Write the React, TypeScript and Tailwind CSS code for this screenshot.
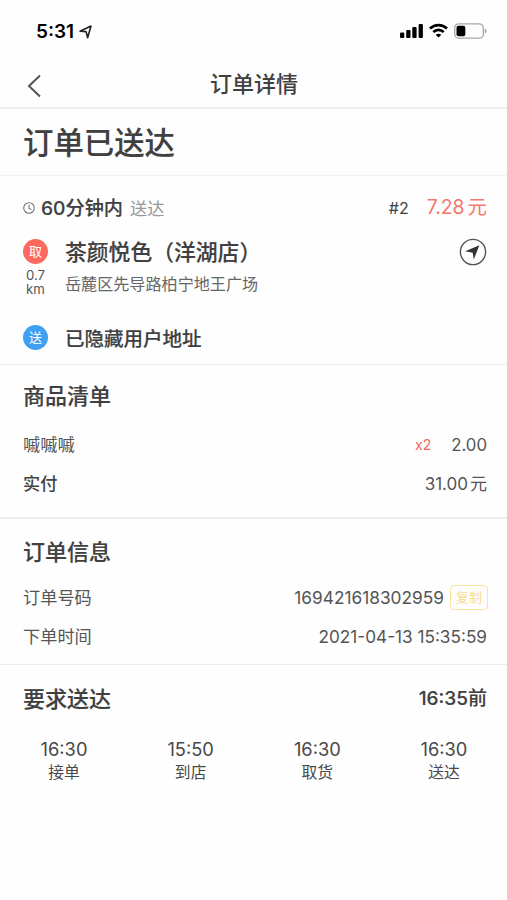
import React from "react";

const medium = "font-medium [-webkit-text-stroke:0.15px_currentColor]";

function InfoRow({ label, strong, children }: { label: string; strong?: boolean; children: React.ReactNode }) {
  return (
    <div className="flex h-[39px] items-center justify-between pt-px text-[17.2px] text-[#555]">
      <span className={strong ? "font-medium text-[#444]" : ""}>{label}</span>
      <div className="flex items-center">{children}</div>
    </div>
  );
}

function Step({ time, label }: { time: string; label: string }) {
  return (
    <div className="flex w-20 flex-col items-center text-[#484848]">
      <span className="h-[23px] text-[18.3px] leading-[24px]">{time}</span>
      <span className="h-[23px] text-[15.8px] leading-[26px]">{label}</span>
    </div>
  );
}

function StatusBar() {
  return (
    <header className="flex h-[60px] items-center justify-between pl-[36px] pr-[20px] pt-[2px] text-black">
      <div className="flex items-center gap-[5px]">
        <span className="w-[38px] pt-px text-[19px] font-semibold leading-none">5:31</span>
        <svg className="mt-px" width="13" height="14" viewBox="0 0 13 14" fill="none" stroke="#222" strokeWidth="1.6" strokeLinejoin="round">
          <path d="M1 6.2 12 1 8.6 12.8 7.1 6.6Z" />
        </svg>
      </div>
      <div className="flex items-center">
        <svg width="24" height="16" viewBox="0 0 24 16">
          <rect x="0" y="9.5" width="4.3" height="5.5" rx="1" />
          <rect x="6.2" y="7" width="4.3" height="8" rx="1" />
          <rect x="12.3" y="4" width="4.3" height="11" rx="1" />
          <rect x="18.6" y="1" width="4.3" height="14" rx="1" />
        </svg>
        <svg className="ml-[5px]" width="19" height="16" viewBox="0 0 19 16" fill="none" stroke="#000">
          <path d="M1 5.5C5.7.9 13.3.9 18 5.5" strokeWidth="2.7" />
          <path d="M4.3 9C7.3 6.1 11.7 6.1 14.7 9" strokeWidth="2.6" />
          <path d="m6.7 11.7 2.8 2.9 2.8-2.9c-1.6-1.4-4-1.4-5.6 0Z" fill="#000" stroke="none" />
        </svg>
        <svg className="ml-[6px]" width="33" height="16" viewBox="0 0 33 16">
          <rect x="0.7" y="0.8" width="28.6" height="14.4" rx="4" fill="none" stroke="#a6a6a6" strokeWidth="1.3" />
          <rect x="2.5" y="2.8" width="8.8" height="10.4" rx="2" />
          <path d="M30.8 5.5c2.3.8 2.3 4.2 0 5Z" fill="#a6a6a6" />
        </svg>
      </div>
    </header>
  );
}

export default function App() {
  return (
    <div lang="zh-CN" className="h-[900px] w-full overflow-hidden bg-[#fefefe] font-['Inter','Noto_Sans_CJK_SC',sans-serif] leading-none text-[#404040]">
      <StatusBar />
      <nav className="grid h-[47px] grid-cols-[60px_1fr_60px] items-center">
        <svg className="ml-[27px] mt-[5px]" width="14" height="24" viewBox="0 0 14 24" fill="none" stroke="#555" strokeWidth="2">
          <path d="M13 1.5 2 12 13 22.5" />
        </svg>
        <h1 className="pl-px text-center text-[22px] font-medium">订单详情</h1>
      </nav>

      <section className="flex h-[69px] items-center border-b border-t-2 border-b-[#f1f1f1] border-t-[#f0f0f0] pl-[23px] pt-[2px]">
        <h2 className={`text-[30.4px] ${medium}`}>订单已送达</h2>
      </section>

      <section className="h-[189px] border-b border-[#ededed] pl-[23px] pr-[20px] pt-[12px]">
        <div className="flex h-[40px] items-center">
          <svg width="12" height="12" viewBox="0 0 12 12" fill="none" stroke="#777" strokeWidth="1.1">
            <circle cx="6" cy="6" r="5.3" />
            <path d="M6 2.8V6.4L8.3 7.5" />
          </svg>
          <span className={`ml-[6px] pt-[2px] text-[19.2px] ${medium}`}>60分钟内</span>
          <span className="ml-[7px] pt-[2px] text-[17.2px] text-[#999]">送达</span>
          <span className="ml-auto text-[16px]">#2</span>
          <span className="ml-[18px] pb-px text-[19.4px] text-[#f4766c]">7.28<span className="ml-[3px]">元</span></span>
        </div>
        <div className="flex h-[86px] pt-[4px]">
          <div className="flex w-[42px] flex-col">
            <div className="mt-[7px] flex size-[25px] items-center justify-center rounded-full bg-[#fb695f] text-[13px] text-white">取</div>
            <div className="mt-[4px] flex w-[25px] flex-col items-center text-[13.2px] leading-[14px] text-[#555]">
              <span>0.7</span>
              <span>km</span>
            </div>
          </div>
          <div className="flex-1">
            <h3 className={`h-[39px] font-['Noto_Sans_CJK_SC',sans-serif] text-[21.8px] leading-[38px] ${medium}`}>茶颜悦色（洋湖店）</h3>
            <p className="text-[16.1px] leading-[26px] text-[#666]">岳麓区先导路柏宁地王广场</p>
          </div>
          <svg className="mt-[6px]" width="28" height="28" viewBox="0 0 28 28">
            <circle cx="14" cy="14" r="12.6" fill="none" stroke="#555" strokeWidth="1.4" />
            <path d="M6.2 13.3 20.4 7.2 14.8 21.5 13.7 14.7Z" fill="#333" />
          </svg>
        </div>
        <div className="flex h-[46px] items-center">
          <div className="flex size-[25px] items-center justify-center rounded-full bg-[#3f9ff2] text-[13px] text-white">送</div>
          <span className={`ml-[17px] pt-[5px] text-[19.5px] ${medium}`}>已隐藏用户地址</span>
        </div>
      </section>

      <section className="h-[154px] border-b-2 border-[#f0f0f0] pl-[23px] pr-[20px]">
        <h3 className={`h-[60px] text-[22px] leading-[62px] ${medium}`}>商品清单</h3>
        <InfoRow label="嘁嘁嘁">
          <span className="text-[14px] text-[#f4665c]">x2</span>
          <span className="ml-[20px] text-[16.8px]">2.00</span>
        </InfoRow>
        <InfoRow label="实付" strong>
          <span className="text-[17px]">31.00<span className="ml-[2px]">元</span></span>
        </InfoRow>
      </section>

      <section className="h-[146px] border-b border-[#ededed] pl-[23px] pr-[20px]">
        <h3 className={`h-[59px] pt-[4px] text-[22px] leading-[58px] ${medium}`}>订单信息</h3>
        <InfoRow label="订单号码">
          <span className="text-[17.3px]">169421618302959</span>
          <button className="-mt-px ml-[6px] mr-[-1px] h-[25px] w-[38px] rounded-[4px] border-[1.5px] border-[#fbe3a0] text-[13px] leading-none text-[#f9dc8d]">复制</button>
        </InfoRow>
        <InfoRow label="下单时间">
          <span className="text-[17.2px]">2021-04-13 15:35:59</span>
        </InfoRow>
      </section>

      <section>
        <div className="flex h-[66px] items-center justify-between pl-[23px] pr-[20px] pt-px">
          <h3 className={`text-[22px] ${medium}`}>要求送达</h3>
          <span className={`text-[19px] ${medium}`}>16:35前</span>
        </div>
        <div className="flex justify-between pl-[24px] pr-[23px] pt-[6px]">
          <Step time="16:30" label="接单" />
          <Step time="15:50" label="到店" />
          <Step time="16:30" label="取货" />
          <Step time="16:30" label="送达" />
        </div>
      </section>
    </div>
  );
}
